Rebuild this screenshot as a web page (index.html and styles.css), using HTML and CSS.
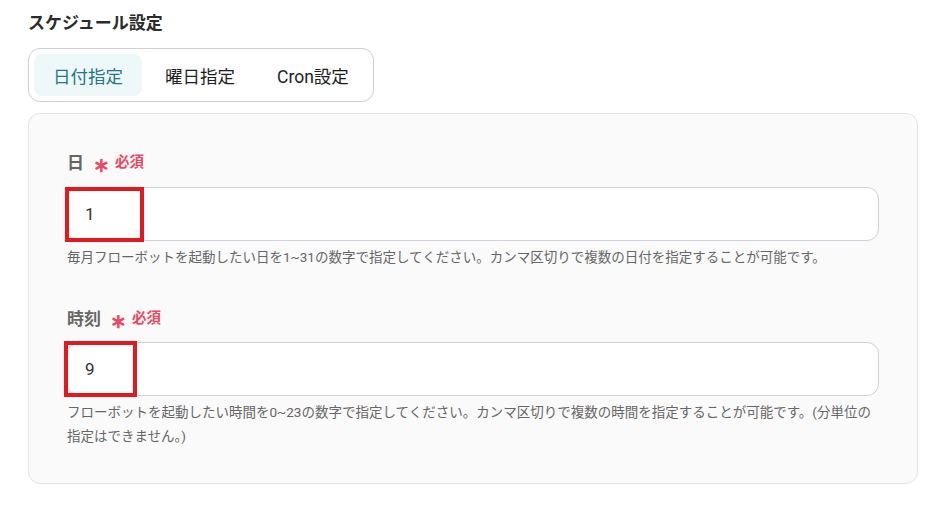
FILE: index.html
```html
<!DOCTYPE html>
<html lang="ja">
<head>
<meta charset="utf-8">
<link rel="stylesheet" href="styles.css">
</head>
<body>
<div class="page">
  <h2 class="title">スケジュール設定</h2>
  <div class="tabs">
    <div class="tab active">日付指定</div>
    <div class="tab">曜日指定</div>
    <div class="tab">Cron設定</div>
  </div>
  <div class="panel">
    <div class="field">
      <div class="label">日<span class="req"><span class="star">∗</span>必須</span></div>
      <div class="input-wrap">
        <div class="input">1</div>
        <div class="mark mark-a"></div>
      </div>
      <p class="help">毎月フローボットを起動したい日を1~31の数字で指定してください。カンマ区切りで複数の日付を指定することが可能です。</p>
    </div>
    <div class="field second">
      <div class="label">時刻<span class="req"><span class="star">∗</span>必須</span></div>
      <div class="input-wrap">
        <div class="input">9</div>
        <div class="mark mark-b"></div>
      </div>
      <p class="help">フローボットを起動したい時間を0~23の数字で指定してください。カンマ区切りで複数の時間を指定することが可能です。(分単位の指定はできません。)</p>
    </div>
  </div>
</div>
</body>
</html>
```
FILE: styles.css
```css
* { box-sizing: border-box; }
html, body { margin: 0; padding: 0; background: #ffffff; }
body {
  font-family: "Roboto", "Noto Sans CJK JP", "Noto Sans", sans-serif;
  color: #333333;
}
.page {
  padding: 10px 21px 0 28px;
}
.title {
  margin: 0;
  font-size: 17px;
  line-height: 26px;
  font-weight: 700;
  color: #2b2b2b;
}
.tabs {
  display: inline-flex;
  gap: 4px;
  margin-top: 12px;
  padding: 5px;
  border: 1px solid #cfcfcf;
  border-radius: 12px;
  background: #ffffff;
}
.tab {
  height: 42px;
  padding: 0 19px;
  display: flex;
  align-items: center;
  font-size: 17.5px;
  color: #1e1e1e;
  border-radius: 8px;
}
.tab.active {
  background: #eff8f8;
  color: #20788a;
}
.panel {
  margin-top: 11px;
  width: 890px;
  background: #fafafa;
  border: 1px solid #e4e4e4;
  border-radius: 12px;
  padding: 37px 38px 35px 38px;
}
.field.second { margin-top: 38px; }
.label {
  font-size: 17px;
  line-height: 24px;
  font-weight: 700;
  color: #666666;
  display: flex;
  align-items: center;
}
.req {
  margin-left: 9px;
  font-size: 14.5px;
  font-weight: 700;
  color: #ec4862;
  display: flex;
  align-items: center;
}
.star {
  font-size: 20px;
  line-height: 1;
  margin-right: 5px;
  position: relative;
  top: 2px;
}
.input-wrap {
  position: relative;
  margin-top: 12px;
}
.field.second .input-wrap { margin-top: 11px; }
.input {
  height: 54px;
  background: #ffffff;
  border: 1px solid #cfd1d8;
  border-radius: 12px;
  padding-left: 17px;
  display: flex;
  align-items: center;
  font-size: 17px;
  color: #333333;
}
.mark {
  position: absolute;
  border: 4px solid #e3191f;
}
.mark-a { left: -2px; top: 0; width: 79px; height: 55px; }
.mark-b { left: -3px; top: -1px; width: 73px; height: 56px; }
.help {
  margin: 4px 0 0 0;
  font-size: 13.5px;
  line-height: 24px;
  color: #666666;
}
```
